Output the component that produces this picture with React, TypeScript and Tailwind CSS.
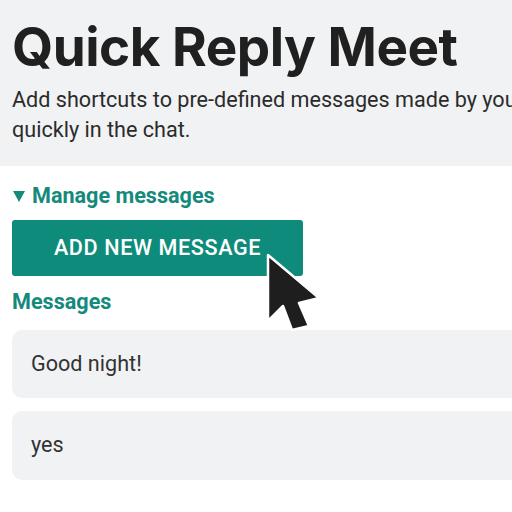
import React from "react";

export default function App() {
  return (
    <div className="w-[512px] h-[512px] overflow-hidden bg-white relative" style={{ fontFamily: "Roboto, sans-serif" }}>
      <div className="bg-[#f1f2f4] h-[166px] pl-[12px] pt-[16px] whitespace-nowrap overflow-hidden">
        <h1 className="text-[53px] leading-[62px] font-bold text-[#202020] tracking-[-0.5px]" style={{ fontFamily: "Inter, sans-serif" }}>
          Quick Reply Meet
        </h1>
        <p className="mt-[7px] text-[21.6px] leading-[30px] text-[#2b2b2b]">
          Add shortcuts to pre-defined messages made by you to use them
          <br />
          quickly in the chat.
        </p>
      </div>
      <div className="pl-[12px] pt-[16px]">
        <div className="text-[21.6px] leading-[28px] font-bold text-[#138a7b] flex items-center">
          <svg className="ml-[1px] mr-[7px]" width="12" height="11" viewBox="0 0 12 11">
            <path d="M0 0 L12 0 L6 11 Z" fill="#138a7b" />
          </svg>
          Manage messages
        </div>
        <button className="mt-[10px] w-[291px] h-[56px] rounded-[3px] bg-[#0f8b7c] text-white text-[21.6px] font-medium tracking-[0.6px] flex items-center justify-center">
          ADD NEW MESSAGE
        </button>
        <div className="mt-[12px] text-[21.6px] leading-[28px] font-bold text-[#138a7b]">Messages</div>
        <div className="mt-[14px] flex flex-col gap-[13px]">
          <div className="h-[68px] w-[520px] rounded-[10px] bg-[#f1f2f4] flex items-center pl-[19px] text-[21.6px] text-[#333]">
            Good night!
          </div>
          <div className="h-[69px] w-[520px] rounded-[10px] bg-[#f1f2f4] flex items-center pl-[19px] text-[21.6px] text-[#333]">
            yes
          </div>
        </div>
      </div>
      <svg className="absolute left-[265px] top-[252px]" width="62" height="84" viewBox="-3 -3 62 84">
        <path d="M0 0 L0 66 L15 51 L24 75 L41 71 L31 48 L51 43 Z" fill="#1e1e1e" stroke="#ffffff" strokeWidth="2.5" strokeLinejoin="round" />
      </svg>
    </div>
  );
}
